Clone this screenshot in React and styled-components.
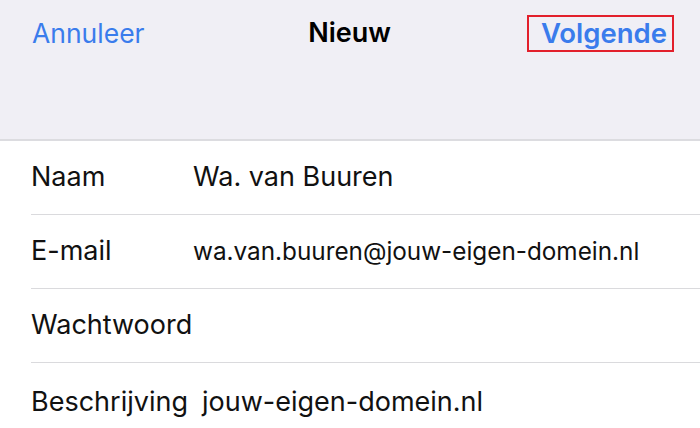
import React from 'react';
import styled, { createGlobalStyle } from 'styled-components';

const GlobalStyle = createGlobalStyle`
  html, body {
    margin: 0;
    padding: 0;
    background: #ffffff;
  }
  body {
    font-family: Inter, "Liberation Sans", sans-serif;
    -webkit-font-smoothing: antialiased;
  }
`;

const Screen = styled.div`
  width: 700px;
  height: 428px;
  overflow: hidden;
  background: #ffffff;
`;

const NavBar = styled.header`
  height: 141px;
  box-sizing: border-box;
  background: #f0eff5;
  border-bottom: 2px solid #dcdce0;
  display: grid;
  grid-template-columns: 1fr auto 1fr;
  align-items: start;
  padding: 14px 26px 0 25px;
`;

const NavButton = styled.button`
  border: none;
  background: none;
  padding: 0 0 0 ${(p) => p.$inset || 0}px;
  font-family: inherit;
  font-size: ${(p) => p.$size}px;
  color: #3a7cec;
  font-weight: ${(p) => (p.$bold ? 600 : 400)};
  justify-self: ${(p) => p.$align};
  line-height: 38px;
`;

const Highlight = styled.span`
  display: inline-block;
  border: 2px solid #e21f2b;
  padding: 0 5px 0 12px;
  height: 33px;
  line-height: 33px;
`;

const Title = styled.h1`
  margin: 0;
  font-size: 27px;
  font-weight: 600;
  color: #000;
  line-height: 38px;
`;

const Form = styled.div`
  display: flex;
  flex-direction: column;
`;

const Row = styled.div`
  height: 74px;
  margin-left: 31px;
  display: flex;
  align-items: center;
  border-bottom: 1px solid #dadadd;
  box-sizing: border-box;
  &:last-child {
    border-bottom: none;
  }
`;

const Label = styled.span`
  width: ${(p) => p.$width}px;
  flex-shrink: 0;
  font-size: 27px;
  color: #111;
  margin-top: ${(p) => p.$shift}px;
`;

const Value = styled.span`
  font-size: ${(p) => p.$size}px;
  color: #111;
  white-space: nowrap;
  margin-top: ${(p) => p.$shift}px;
`;

const fields = [
  { label: 'Naam', value: 'Wa. van Buuren', width: 162, size: 27, shift: -2 },
  { label: 'E-mail', value: 'wa.van.buuren@jouw-eigen-domein.nl', width: 162, size: 24.3, shift: -2 },
  { label: 'Wachtwoord', value: '', width: 162, size: 27, shift: -2 },
  { label: 'Beschrijving', value: 'jouw-eigen-domein.nl', width: 171, size: 27, shift: 2 },
];

const App = () => (
  <Screen>
    <GlobalStyle />
    <NavBar>
      <NavButton $align="start" $size={26.5} $inset={7}>Annuleer</NavButton>
      <Title>Nieuw</Title>
      <NavButton $align="end" $size={27.5} $bold>
        <Highlight>Volgende</Highlight>
      </NavButton>
    </NavBar>
    <Form>
      {fields.map((f) => (
        <Row key={f.label}>
          <Label $width={f.width} $shift={f.shift}>{f.label}</Label>
          <Value $size={f.size} $shift={f.shift}>{f.value}</Value>
        </Row>
      ))}
    </Form>
  </Screen>
);

export default App;
